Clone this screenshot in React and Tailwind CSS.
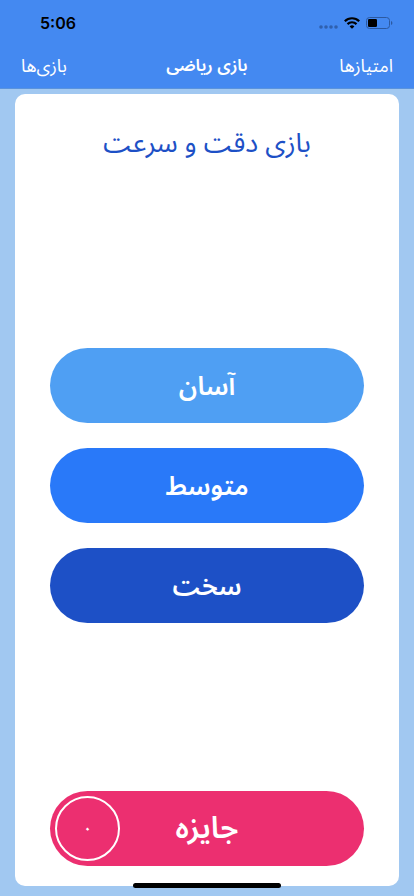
const LEVELS = [
  { id: 'easy', label: 'آسان', color: 'bg-[#4f9ff3]' },
  { id: 'medium', label: 'متوسط', color: 'bg-[#2979f9]' },
  { id: 'hard', label: 'سخت', color: 'bg-[#1d50c6]' },
];

function StatusBar() {
  return (
    <div dir="ltr" className="flex h-11 items-center justify-between pl-10 pr-5 pt-0.5 text-black">
      <span className="font-['Inter'] text-base font-semibold leading-5">5:06</span>
      <div className="flex items-center gap-1">
        <svg className="h-3 w-5" viewBox="0 0 20 12" fill="#2f60ae" aria-hidden="true">
          <circle cx="3" cy="10" r="1.8" />
          <circle cx="8" cy="10" r="1.8" />
          <circle cx="13" cy="10" r="1.8" />
          <circle cx="18" cy="10" r="1.8" />
        </svg>
        <svg className="ml-0.5 h-3 w-4" viewBox="0 0 16 12" fill="none" stroke="black" strokeWidth="2.2" aria-hidden="true">
          <path d="M0.8 4.2a10.3 10.3 0 0 1 14.4 0" />
          <path d="M3.5 7.1a6.4 6.4 0 0 1 9 0" />
          <path d="M8 11.8L5.6 9.4a3.4 3.4 0 0 1 4.8 0z" fill="black" stroke="none" />
        </svg>
        <svg className="ml-0.5 h-3 w-7" viewBox="0 0 28 12" aria-hidden="true">
          <rect x="0.5" y="0.5" width="23" height="11" rx="3" fill="none" stroke="#2c59a0" />
          <rect x="2" y="2" width="9" height="8" rx="1.2" fill="black" />
          <path d="M25 4v4a2 2 0 0 0 1.4-2A2 2 0 0 0 25 4z" fill="#2c59a0" />
        </svg>
      </div>
    </div>
  );
}

function NavBar() {
  return (
    <nav className="grid h-[45px] grid-cols-3 items-center border-b border-[#5a93dd] px-[21px] text-lg leading-6 text-white">
      <a href="#scores" className="justify-self-start">امتیازها</a>
      <h1 className="justify-self-center whitespace-nowrap text-[17px] font-semibold">بازی ریاضی</h1>
      <a href="#games" className="justify-self-end">بازی‌ها</a>
    </nav>
  );
}

export default function App() {
  return (
    <div
      dir="rtl"
      lang="fa"
      className="flex min-h-screen flex-col bg-[#a1c8f1] font-['Noto_Sans_Arabic','DejaVu_Sans',sans-serif]"
    >
      <header className="bg-[#4489f1]">
        <StatusBar />
        <NavBar />
      </header>

      <main className="mx-[15px] mb-[10px] mt-[5px] flex flex-1 flex-col rounded-[10px] bg-white px-[35px] pb-5">
        <h2 className="flex h-[85px] items-center justify-center pt-4 text-[27px] text-[#1d50c6]">
          بازی دقت و سرعت
        </h2>

        <div className="flex flex-1 flex-col justify-center gap-[25px]">
          {LEVELS.map((level) => (
            <button
              key={level.id}
              type="button"
              className={`h-[75px] rounded-full pt-0.5 text-[26px] font-semibold text-white ${level.color}`}
            >
              {level.label}
            </button>
          ))}
        </div>

        <button
          type="button"
          className="relative h-[75px] rounded-full bg-[#ec2f70] text-3xl font-semibold text-white"
        >
          جایزه
          <span className="absolute left-[5px] top-[5px] flex size-[65px] items-center justify-center rounded-full border-2 border-white text-base">
            ۰
          </span>
        </button>
      </main>

      <div className="fixed inset-x-0 bottom-2 mx-auto h-[5px] w-[148px] rounded-full bg-black" />
    </div>
  );
}
